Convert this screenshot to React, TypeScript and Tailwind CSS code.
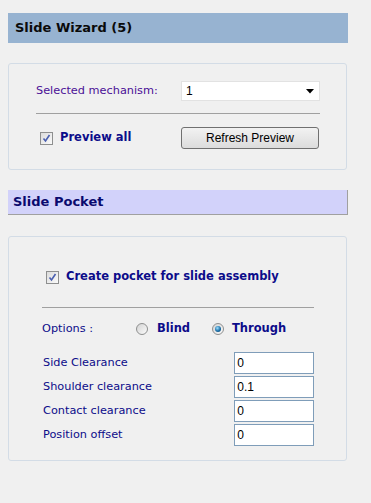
import React from "react";

const verdana = { fontFamily: '"DejaVu Sans", Verdana, sans-serif' };

function CheckBox() {
  return (
    <div className="w-[13px] h-[13px] border border-[#8e8f8f] bg-gradient-to-br from-[#dcdcdc] to-[#fafafa] flex items-center justify-center shrink-0">
      <svg width="9" height="9" viewBox="0 0 9 9">
        <path d="M1.5 4.5 L3.5 7 L7.5 1" fill="none" stroke="#4a5fb0" strokeWidth="1.6" />
      </svg>
    </div>
  );
}

function Radio({ checked }: { checked?: boolean }) {
  return (
    <div className="w-[12px] h-[12px] rounded-full border border-[#8e8f8f] bg-gradient-to-br from-[#d4d4d4] to-[#fbfbfb] flex items-center justify-center shrink-0">
      {checked && (
        <div className="w-[6px] h-[6px] rounded-full bg-[radial-gradient(circle_at_40%_35%,#9fe0ff,#1a6fa8_55%,#0b3c66)]" />
      )}
    </div>
  );
}

const fields = [
  { label: "Side Clearance", value: "0" },
  { label: "Shoulder clearance", value: "0.1" },
  { label: "Contact clearance", value: "0" },
  { label: "Position offset", value: "0" },
];

export default function App() {
  return (
    <div className="w-[371px] h-[503px] bg-[#f0f0f0] pl-[8px] pt-[13px] flex flex-col" style={verdana}>
      <div className="w-[340px] h-[30px] bg-[#97b3d1] flex items-center pl-[7px]">
        <span className="text-[13px] font-bold text-[#0a0a0a]">Slide Wizard (5)</span>
      </div>

      <div className="mt-[20px] w-[339px] h-[107px] border border-[#d3dce6] rounded-[3px] flex flex-col pl-[27px] pr-[26px] pt-[17px]">
        <div className="flex items-center h-[20px]">
          <span className="text-[11.3px] text-[#4a0f96] w-[145px]">Selected mechanism:</span>
          <div className="flex-1 h-[20px] bg-white border border-[#e2e2e2] flex items-center justify-between pl-[4px] pr-[5px]">
            <span className="text-[12px] text-black" style={{ fontFamily: '"Liberation Sans", Arial, sans-serif' }}>1</span>
            <svg width="8" height="5" viewBox="0 0 8 5">
              <path d="M0 0 H8 L4 4.5 Z" fill="#000" />
            </svg>
          </div>
        </div>
        <div className="mt-[12px] h-px bg-[#a0a0a0]" />
        <div className="mt-[13px] flex items-center h-[22px]">
          <div className="flex items-center gap-[7px] w-[145px] pl-[4px]">
            <CheckBox />
            <span className="text-[11.5px] font-bold text-[#0c0c8a]">Preview all</span>
          </div>
          <button
            className="w-[138px] h-[22px] border border-[#707070] rounded-[3px] bg-gradient-to-b from-[#f2f2f2] to-[#dcdcdc] text-[12px] text-black"
            style={{ fontFamily: '"Liberation Sans", Arial, sans-serif' }}
          >
            Refresh Preview
          </button>
        </div>
      </div>

      <div className="mt-[20px] w-[340px] h-[25px] bg-[#d2d2fa] border-b border-r border-[#a0a0a0] flex items-center pl-[5px]">
        <span className="text-[13px] font-bold text-[#0a0a6e]">Slide Pocket</span>
      </div>

      <div className="mt-[21px] w-[339px] h-[225px] border border-[#d3dce6] rounded-[3px] flex flex-col pl-[33px] pr-[32px] pt-[33px]">
        <div className="flex items-center gap-[7px] pl-[4px] h-[14px]">
          <CheckBox />
          <span className="text-[11.5px] font-bold text-[#0c0c8a]">Create pocket for slide assembly</span>
        </div>
        <div className="mt-[23px] h-px bg-[#a0a0a0]" />
        <div className="mt-[13px] flex items-center h-[16px]">
          <span className="text-[11.3px] text-[#0c0c8a] w-[94px]">Options :</span>
          <div className="flex items-center gap-[9px] w-[76px]">
            <Radio />
            <span className="text-[11.5px] font-bold text-[#0c0c8a]">Blind</span>
          </div>
          <div className="flex items-center gap-[8px]">
            <Radio checked />
            <span className="text-[11.5px] font-bold text-[#0c0c8a]">Through</span>
          </div>
        </div>
        <div className="mt-[15px] flex flex-col gap-[2px]">
          {fields.map((f) => (
            <div key={f.label} className="flex items-center h-[22px]">
              <span className="text-[11.3px] text-[#0c0c8a] w-[193px] pl-[1px]">{f.label}</span>
              <div className="w-[80px] h-[22px] bg-white border border-[#7f9db9] flex items-center pl-[2px]">
                <span className="text-[12px] text-black" style={{ fontFamily: '"Liberation Sans", Arial, sans-serif' }}>{f.value}</span>
              </div>
            </div>
          ))}
        </div>
      </div>
    </div>
  );
}
